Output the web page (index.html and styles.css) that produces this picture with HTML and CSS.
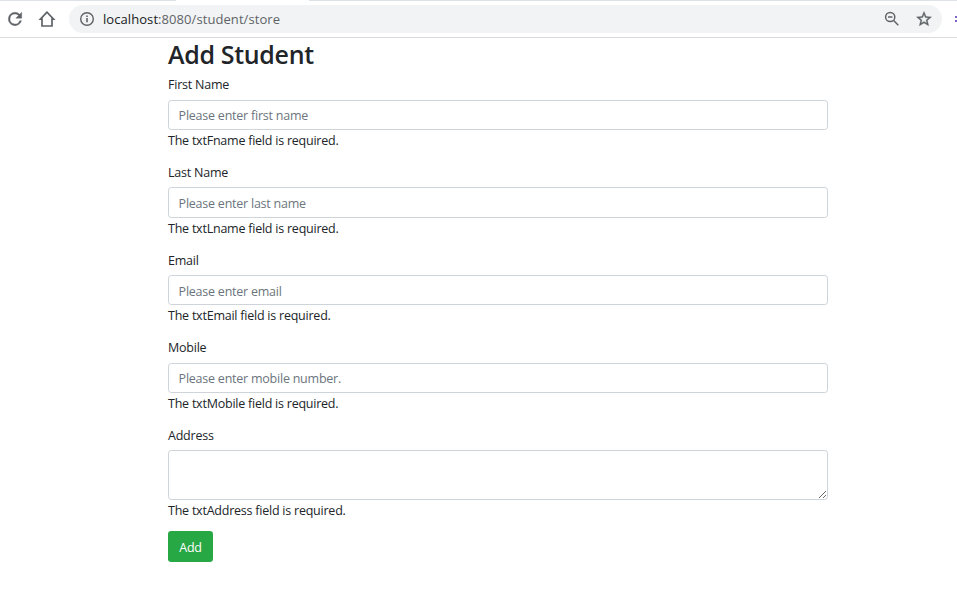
FILE: index.html
```html
<!DOCTYPE html>
<html lang="en">
<head>
<meta charset="utf-8">
<title>Add Student</title>
<link rel="stylesheet" href="styles.css">
</head>
<body>
<header class="browser">
  <div class="tabs"><span class="tab-strip"></span><span class="tab-active"></span><span class="tab-strip tab-rest"></span></div>
  <div class="toolbar">
    <svg class="nav-icon" viewBox="0 0 24 24"><path stroke="#5f6368" stroke-width=".5" d="M17.65 6.35A7.96 7.96 0 0 0 12 4a8 8 0 1 0 7.73 10h-2.08A6 6 0 1 1 12 6c1.66 0 3.14.69 4.22 1.78L13 11h7V4z"/></svg>
    <svg class="nav-icon home" viewBox="0 0 20 20"><path d="M10 3.2 3.4 10.2H5V17H15V10.2H16.6Z" fill="none" stroke="#5f6368" stroke-width="1.7"/></svg>
    <div class="address">
      <svg class="info" viewBox="0 0 16 16"><circle cx="8" cy="8" r="6.3" fill="none" stroke="#5f6368" stroke-width="1.4"/><path d="M7.2 7.1h1.6v4.2H7.2zM7.2 4.5h1.6v1.6H7.2z"/></svg>
      <span class="url"><span class="host">localhost</span>:8080/student/store</span>
      <svg class="tool" viewBox="0 0 18 18"><g fill="none" stroke="#5f6368" stroke-width="1.5"><circle cx="7.2" cy="7" r="4.6"/><path d="M10.6 10.5 15.3 15.2M5 7h4.4"/></g></svg>
      <svg class="tool star" viewBox="0 0 24 24"><path stroke="#5f6368" stroke-width=".5" d="m22 9.24-7.19-.62L12 2 9.19 8.63 2 9.24l5.46 4.73L5.82 21 12 17.27 18.18 21l-1.63-7.03zM12 15.4l-3.76 2.27 1-4.28-3.32-2.88 4.38-.38L12 6.1l1.71 4.04 4.38.38-3.32 2.88 1 4.28z"/></svg>
    </div>
    <span class="extension"><i></i><i></i></span>
  </div>
</header>
<main class="container">
  <h2>Add Student</h2>
  <form novalidate>
    <div class="group">
      <label for="fname">First Name</label>
      <input id="fname" type="text" placeholder="Please enter first name">
      <p class="error">The txtFname field is required.</p>
    </div>
    <div class="group">
      <label for="lname">Last Name</label>
      <input id="lname" type="text" placeholder="Please enter last name">
      <p class="error">The txtLname field is required.</p>
    </div>
    <div class="group">
      <label for="email">Email</label>
      <input id="email" type="text" placeholder="Please enter email">
      <p class="error">The txtEmail field is required.</p>
    </div>
    <div class="group">
      <label for="mobile">Mobile</label>
      <input id="mobile" type="text" placeholder="Please enter mobile number.">
      <p class="error">The txtMobile field is required.</p>
    </div>
    <div class="group last">
      <label for="address">Address</label>
      <textarea id="address"></textarea>
      <p class="error">The txtAddress field is required.</p>
    </div>
    <button type="button">Add</button>
  </form>
</main>
</body>
</html>
```
FILE: styles.css
```css
* { box-sizing: border-box; }
body {
  margin: 0;
  height: 601px;
  overflow: hidden;
  background: #fff;
  color: #212529;
  font-family: "Open Sans", "Noto Sans", sans-serif;
  font-size: 12.5px;
  line-height: 19.2px;
  letter-spacing: -0.23px;
}
.browser { height: 38px; border-bottom: 1px solid #d9dbde; }
.tabs { display: flex; height: 1px; }
.tab-strip { width: 176px; background: #dee1e6; }
.tab-active { width: 133px; }
.tab-rest { flex: 1; width: auto; }
.toolbar { display: flex; align-items: center; height: 36px; padding-left: 5px; }
svg { flex: none; fill: #5f6368; }
.nav-icon { width: 20px; height: 20px; }
.home { margin-left: 12px; }
.address {
  display: flex;
  flex: none;
  align-items: center;
  width: 873px;
  height: 28px;
  margin-left: 12px;
  padding: 0 9px 0 10px;
  border-radius: 14px;
  background: #f1f3f4;
}
.info { width: 16px; height: 16px; }
.url {
  flex: 1;
  margin-left: 8px;
  padding-top: 2px;
  color: #5f6368;
  font-size: 13px;
  letter-spacing: 0.07px;
}
.host { color: #202124; }
.tool { width: 18px; height: 18px; }
.star { margin-left: 14px; }
.extension { display: flex; flex: none; flex-direction: column; gap: 2px; margin-left: 13px; }
.extension i { width: 2px; height: 2px; background: #7d62c8; }
.container { width: 660px; margin-left: 168px; }
h2 {
  height: 30.4px;
  margin: 0 0 5.7px;
  padding-top: 1px;
  font-size: 25px;
  font-weight: 600;
  line-height: 30.4px;
  letter-spacing: -0.33px;
}
.group { margin-bottom: 12.48px; }
.last { margin-bottom: 11.6px; }
label { display: block; height: 19.2px; margin-bottom: 6.4px; padding-top: 1.28px; }
input, textarea {
  display: block;
  width: 100%;
  margin: 0;
  border: 1px solid #ced4da;
  border-radius: 3.2px;
  background: #fff;
  color: #495057;
  font: inherit;
  letter-spacing: inherit;
  outline: none;
}
input { height: 30.4px; padding: 2px 9.6px 0; }
textarea { height: 50px; padding: 5px 9.6px; resize: vertical; }
input::placeholder { color: #6c757d; opacity: 1; }
.error { height: 19.2px; margin: 0; padding-top: 1px; }
button {
  display: block;
  width: 45px;
  height: 31px;
  padding: 2px 0 0;
  border: 0;
  border-radius: 3.2px;
  background: #28a745;
  color: #fff;
  font: inherit;
  letter-spacing: inherit;
}
```
